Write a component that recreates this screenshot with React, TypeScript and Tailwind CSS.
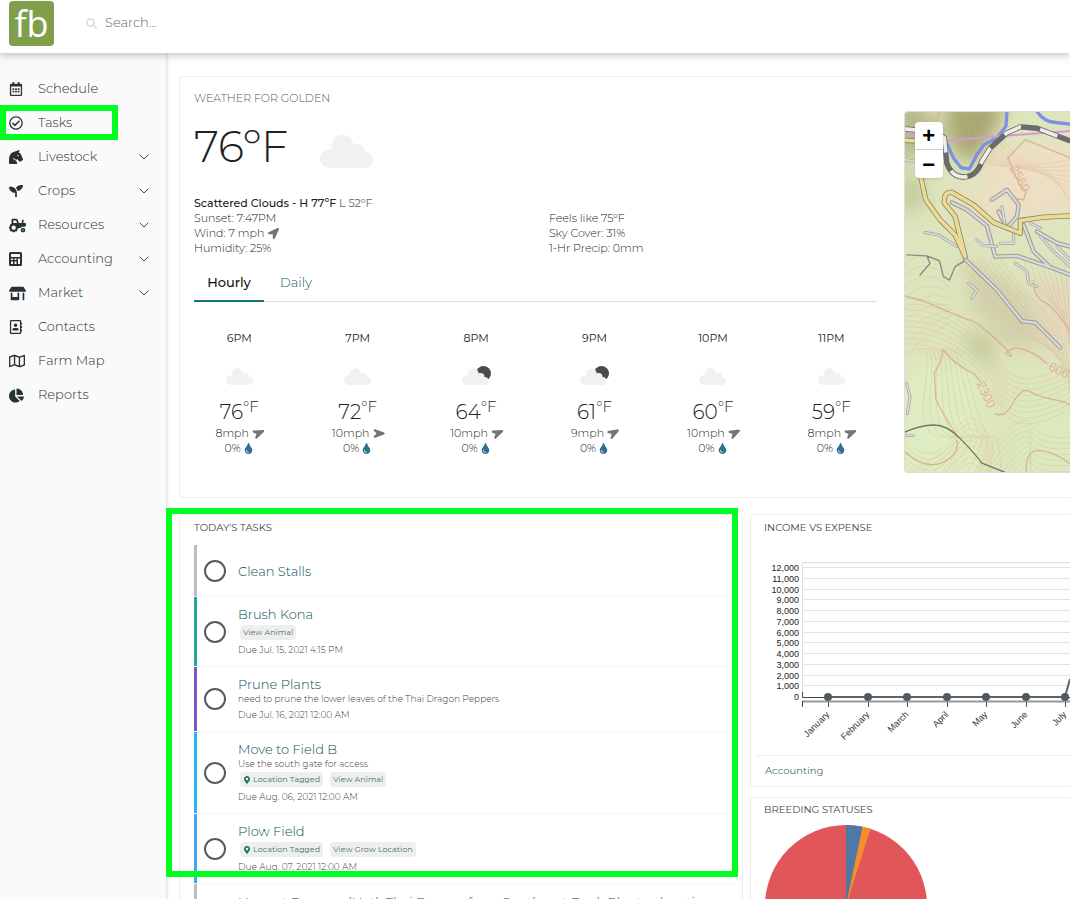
import { useState } from 'react'
import type { ReactNode } from 'react'
import { ChevronDown } from 'lucide-react'
import {
  FaChartPie,
  FaHorseHead,
  FaLocationArrow,
  FaMapMarkerAlt,
  FaRegAddressBook,
  FaRegCalendarAlt,
  FaRegCheckCircle,
  FaRegMap,
  FaSearch,
  FaSeedling,
  FaStoreAlt,
  FaTint,
  FaTractor,
} from 'react-icons/fa'

interface NavItem {
  label: string
  icon: ReactNode
  expandable?: boolean
  highlighted?: boolean
}

interface Hour {
  time: string
  temp: number
  wind: number
  rotation: string
  night?: boolean
}

interface Task {
  title: string
  color: string
  note?: string
  located?: boolean
  link?: string
  due?: string
}

function CalculatorIcon() {
  return (
    <svg viewBox="0 0 13 14" className="h-3.5 w-[13px]" fill="currentColor">
      <path
        fillRule="evenodd"
        d="M1.5 0h10A1.5 1.5 0 0 1 13 1.500v11a1.500 1.500 0 0 1-1.500 1.500h-10A1.500 1.500 0 0 1 0 12.500v-11A1.500 1.500 0 0 1 1.500 0zM2 2v3h9V2zM2 6.500v1.500h2V6.500zM5.500 6.500v1.500h2V6.500zM9 6.500V12h2V6.500zM2 9.500V12h2V9.500zM5.500 9.500V12h2V9.500z"
      />
    </svg>
  )
}

const navItems: NavItem[] = [
  { label: 'Schedule', icon: <FaRegCalendarAlt size={14} /> },
  { label: 'Tasks', icon: <FaRegCheckCircle size={14} />, highlighted: true },
  { label: 'Livestock', icon: <FaHorseHead size={14} />, expandable: true },
  { label: 'Crops', icon: <FaSeedling size={14} />, expandable: true },
  { label: 'Resources', icon: <FaTractor size={17} />, expandable: true },
  { label: 'Accounting', icon: <CalculatorIcon />, expandable: true },
  { label: 'Market', icon: <FaStoreAlt size={17} />, expandable: true },
  { label: 'Contacts', icon: <FaRegAddressBook size={14} /> },
  { label: 'Farm Map', icon: <FaRegMap size={16} /> },
  { label: 'Reports', icon: <FaChartPie size={15} /> },
]

const hours: Hour[] = [
  { time: '6PM', temp: 76, wind: 8, rotation: 'rotate-[22deg]' },
  { time: '7PM', temp: 72, wind: 10, rotation: 'rotate-45' },
  { time: '8PM', temp: 64, wind: 10, rotation: 'rotate-[22deg]', night: true },
  { time: '9PM', temp: 61, wind: 9, rotation: 'rotate-[15deg]', night: true },
  { time: '10PM', temp: 60, wind: 10, rotation: 'rotate-[18deg]' },
  { time: '11PM', temp: 59, wind: 8, rotation: 'rotate-[22deg]' },
]

const tasks: Task[] = [
  { title: 'Clean Stalls', color: 'border-l-[#bdbdbd]' },
  { title: 'Brush Kona', color: 'border-l-[#26a69a]', link: 'View Animal', due: 'Due Jul. 15, 2021 4:15 PM' },
  {
    title: 'Prune Plants',
    color: 'border-l-[#7e57c2]',
    note: 'need to prune the lower leaves of the Thai Dragon Peppers',
    due: 'Due Jul. 16, 2021 12:00 AM',
  },
  {
    title: 'Move to Field B',
    color: 'border-l-[#29b6f6]',
    note: 'Use the south gate for access',
    located: true,
    link: 'View Animal',
    due: 'Due Aug. 06, 2021 12:00 AM',
  },
  {
    title: 'Plow Field',
    color: 'border-l-[#42a5f5]',
    located: true,
    link: 'View Grow Location',
    due: 'Due Aug. 07, 2021 12:00 AM',
  },
  {
    title: 'Harvest Peppers (Hot), Thai Dragon from Southeast Deck Planter, location',
    color: 'border-l-[#bdbdbd]',
    due: 'Due Aug. 08, 2021 12:00 AM',
  },
]

const months = ['January', 'February', 'March', 'April', 'May', 'June', 'July']

function CloudIcon({ night = false, className }: { night?: boolean; className: string }) {
  return (
    <svg viewBox={night ? '0 -5 58 38' : '0 0 53 33'} className={className}>
      {night && <circle cx="43" cy="10" r="15" fill="#4a4a4a" />}
      <g fill="#f1f1f0">
        <circle cx="22.500" cy="11" r="11" />
        <circle cx="37" cy="17" r="8" />
        <circle cx="9.500" cy="23.500" r="9.500" />
        <circle cx="45" cy="25" r="8" />
        <path d="M14 12H37L45 19V33H9.500z" />
      </g>
    </svg>
  )
}

function Sidebar() {
  return (
    <nav className="w-[167px] shrink-0 border-r border-[#e6eaea] bg-[#fafafa] pt-[19px] shadow-[1px_0_3px_rgba(0,0,0,0.1)]">
      {navItems.map((item) => (
        <a key={item.label} href="#" className="relative flex h-[34px] items-center pr-3.5 pl-[9px] text-[#263238]">
          <span className="w-[29px]">{item.icon}</span>
          <span className="flex-1 text-[13px] font-light text-[#263238]">{item.label}</span>
          {item.expandable && <ChevronDown size={16} strokeWidth={1.5} className="text-[#444]" />}
          {item.highlighted && (
            <span className="pointer-events-none absolute -top-px left-0 h-[35px] w-[118px] border-[6px] border-[#00ff21]" />
          )}
        </a>
      ))}
    </nav>
  )
}

function TopoMap() {
  const slopes = Array.from({ length: 9 }, (_, i) => i * 17)
  return (
    <svg
      viewBox="45 36 495 1080"
      preserveAspectRatio="xMidYMid slice"
      className="block h-[360px] w-full"
      fill="none"
      strokeLinejoin="round"
      strokeLinecap="round"
    >
      <defs>
        <filter id="relief" x="-30%" y="-30%" width="160%" height="160%">
          <feGaussianBlur stdDeviation="26" />
        </filter>
      </defs>
      <rect x="45" y="36" width="495" height="1080" fill="#dde5bd" />
      <g filter="url(#relief)">
        <path fill="#a9a873" d="M165 0H345L310 110L235 200L175 130z" />
        <path fill="#b5b888" d="M20 0H90L160 110L20 200z" />
        <path fill="#ecdfc4" d="M300 150L580 110V330L380 380L250 300z" />
        <path fill="#e6debf" d="M170 250L320 330L300 430L180 330z" />
        <path fill="#c5cc9e" d="M20 230H90L120 310L20 350z" />
        <path fill="#d3d1ac" d="M220 470L380 560L520 760L340 740L240 620z" />
        <path fill="#c4cc9b" d="M220 690L310 720L300 810L230 750z" />
        <path fill="#dfedc2" d="M60 800H250L300 1140H20z" />
        <path fill="#e2d9bb" d="M430 540H580V790L440 740z" />
        <path fill="#dbe9bf" d="M380 880L580 850V1150H330z" />
      </g>

      <g stroke="#dca582" strokeWidth="2" opacity="0.4">
        {slopes.map((d) => (
          <g key={d}>
            <path d={`M${245 + d} 36Q${190 + d} 75 ${205 + d} 120T${290 + d} 190T540 ${180 + d}`} />
            <path d={`M${195 + d} 480Q${250 + d} 560 ${330 + d} 640T540 ${770 + d}`} />
            <path d={`M45 ${595 + d}Q130 ${590 + d} 210 ${645 + d}T335 ${790 + d}T540 ${790 + d}`} />
            <path d={`M45 ${490 + d * 2}Q120 ${430 + d * 2} 180 ${530 + d}`} />
            <path d={`M${60 + d} 760Q${130 + d / 2} 700 ${105 + d} 860T${170 + d} 1010T${60 + d * 2} 1116`} />
            <path d={`M45 ${1020 + d}Q130 ${1110 + d} 190 ${1000 + d}T300 ${1030 + d}`} />
            <path d={`M${250 + d} 1116Q${390 + d / 3} ${920 + d} 420 ${970 + d}T540 ${1010 + d}`} />
            <path d={`M${400 + d} 480Q${420 + d} 570 540 ${650 + d}`} />
            <path d={`M45 ${90 + d}Q110 ${50 + d} 150 36`} />
          </g>
        ))}
      </g>
      <g stroke="#d9a27c" strokeWidth="4" opacity="0.7">
        <path d="M540 175L405 120L353 175L390 260L408 275L400 300L370 296" />
        <path d="M45 588Q100 600 160 628T240 660T325 725T345 760Q365 738 400 748T470 790" />
        <path d="M206 1014Q150 930 137 895L133 815Q155 790 158 748Q190 790 250 820L275 850M315 940Q345 955 370 905Q395 860 420 875T500 900T540 935" />
        <path d="M45 1055Q110 1110 160 1085T200 1020M408 1116Q405 1050 445 1050T540 1090" />
        <path d="M430 540Q430 590 460 605T540 695" />
      </g>

      <path stroke="#7d90e2" strokeWidth="10" d="M350 36L347 80L320 115L282 135L260 165L238 208L213 204L190 175L172 135M440 36Q460 65 490 68L540 74" />
      <path stroke="#d798d6" strokeWidth="6" d="M45 104L165 124L350 108L540 94" />

      <g stroke="#8a8a84" strokeWidth="4">
        <path d="M50 465L110 468L148 482L160 530L178 540L195 500L225 482M110 468L120 490L90 525" />
        <path stroke="#70766c" d="M45 995Q90 975 130 974T210 1014T275 1088L345 1116" />
      </g>
      <g stroke="#9a9a98" strokeWidth="13">
        <path d="M185 308L230 330L290 378L315 470L380 468L480 502L540 525M305 300L350 270L385 315L380 350L350 385L325 335M400 375L430 455L480 502M440 395L500 430L540 440M225 478L320 570L395 663L435 668L510 743" />
      </g>
      <g stroke="#d9d9d9" strokeWidth="7">
        <path d="M185 308L230 330L290 378L315 470L380 468L480 502L540 525M305 300L350 270L385 315L380 350L350 385L325 335M400 375L430 455L480 502M440 395L500 430L540 440M225 478L320 570L395 663L435 668L510 743" />
      </g>
      <g stroke="#a2a2a0" strokeWidth="9">
        <path d="M260 420L280 437L320 440M335 320L345 380M370 395V430H330M105 398L145 405L200 440M375 490L410 515L415 550L440 560M235 550L260 570L245 595M45 180L75 185M48 1005H70M50 850L60 890L52 940M420 370L450 385M450 410L490 455L540 500M500 440L540 480" />
      </g>
      <g stroke="#dcdcdc" strokeWidth="5">
        <path d="M260 420L280 437L320 440M335 320L345 380M370 395V430H330M105 398L145 405L200 440M375 490L410 515L415 550L440 560M235 550L260 570L245 595M45 180L75 185M48 1005H70M50 850L60 890L52 940M420 370L450 385M450 410L490 455L540 500M500 440L540 480" />
      </g>

      <path stroke="#8d8769" strokeWidth="16" d="M45 122L85 125L92 230L107 300L150 360L195 405L225 470L195 350L163 310Q160 275 185 278L250 315L310 368L390 400V362L460 352L540 348" />
      <path stroke="#eadb95" strokeWidth="11" d="M45 122L85 125L92 230L107 300L150 360L195 405L225 470L195 350L163 310Q160 275 185 278L250 315L310 368L390 400V362L460 352L540 348" />

      <path stroke="#6b6b69" strokeWidth="16" strokeLinecap="butt" d="M45 88L140 98L163 115L170 190Q185 232 220 232Q260 230 275 185L300 145L350 100L390 82L440 86L540 124" />
      <path stroke="#eeeeea" strokeWidth="11" strokeLinecap="butt" strokeDasharray="55 58" d="M45 88L140 98L163 115L170 190Q185 232 220 232Q260 230 275 185L300 145L350 100L390 82L440 86L540 124" />

      <g fill="#e0b39c" fontFamily="Liberation Sans" fontSize="38">
        <text transform="translate(358 205) rotate(62)">2560</text>
        <text transform="translate(258 850) rotate(65)">2300</text>
        <text transform="translate(472 808) rotate(25)">600</text>
      </g>
    </svg>
  )
}

function IncomeChart() {
  return (
    <svg viewBox="0 0 306 200" preserveAspectRatio="xMinYMin slice" className="block h-[200px] w-full" fontFamily="Liberation Sans">
      <path d="M38.500 153V17.500H306" fill="none" stroke="#dedede" />
      {Array.from({ length: 13 }, (_, i) => {
        const y = Math.round(152 - i * 10.75)
        return (
          <g key={i}>
            {i > 0 && <path d={`M38 ${y - 0.5}H306`} stroke="#e3e3e3" />}
            <text x="35" y={y + 3} textAnchor="end" fontSize="9" fill="#222">
              {(i * 1000).toLocaleString('en-US')}
            </text>
          </g>
        )
      })}
      <path d="M38.500 147V152.500H306" fill="none" stroke="#444" />
      <path d="M38 156.500H306" stroke="#999" strokeWidth="2" />
      <path d="M38.500 156V162" stroke="#444" />
      <path d="M64 152H301L306 134" fill="none" stroke="#5a646b" strokeWidth="2" />
      {months.map((month, i) => {
        const x = Math.round(64 + i * 39.5)
        return (
          <g key={month}>
            <path d={`M${x + 0.5} 157V162`} stroke="#555" />
            <circle cx={x} cy="152" r="4" fill="#4f5a61" />
            <text transform={`translate(${x + 2} 170) rotate(-45)`} textAnchor="end" fontSize="9" fill="#333">
              {month}
            </text>
          </g>
        )
      })}
    </svg>
  )
}

function BreedingPie() {
  return (
    <svg viewBox="-81 -81 162 162" className="ml-px block size-[162px]">
      <circle r="81" fill="#e15759" />
      <path d="M0 0V-81A81 81 0 0 1 16.500 -79.300z" fill="#4e79a7" />
      <path d="M0 0L16.500 -79.300A81 81 0 0 1 24.500 -77.200z" fill="#f28e2b" />
    </svg>
  )
}

function WeatherCard() {
  const [tab, setTab] = useState('Hourly')

  return (
    <section className="flex h-[422px] gap-[27px] rounded-l border border-r-0 border-[#eee] pl-3.5">
      <div className="min-w-0 flex-1 pt-[13px]">
        <h2 className="text-[11px] leading-4 font-light text-[#555]">WEATHER FOR GOLDEN</h2>
        <div className="mt-[11px] flex h-[61px] gap-8">
          <span className="text-[43px] leading-[60px] font-light text-[#222]">76ºF</span>
          <CloudIcon className="mt-[18px] h-[33px] w-[53px]" />
        </div>
        <div className="mt-[18px] grid grid-cols-[52fr_48fr] text-[11px] leading-[15px] font-light text-[#222]">
          <div>
            <p className="font-normal text-[#666]">
              <span className="font-medium text-[#222]">Scattered Clouds - H 77ºF</span> L 52ºF
            </p>
            <p>Sunset: 7:47PM</p>
            <p className="flex items-center gap-1">
              Wind: 7 mph <FaLocationArrow size={11} className="text-[#757575]" />
            </p>
            <p>Humidity: 25%</p>
          </div>
          <div className="pt-[15px]">
            <p>Feels like 75ºF</p>
            <p>Sky Cover: 31%</p>
            <p>1-Hr Precip: 0mm</p>
          </div>
        </div>
        <div className="mt-[9px] flex h-[37px] border-b border-[#ddd] text-[13px]">
          {['Hourly', 'Daily'].map((name) => (
            <button
              key={name}
              type="button"
              onClick={() => setTab(name)}
              className={
                tab === name
                  ? '-mb-px w-[70px] border-b-2 border-[#12776c] font-medium text-[#111]'
                  : 'w-[64px] font-light text-[#12585c]'
              }
            >
              {name}
            </button>
          ))}
        </div>
        <div className="-mx-3.5 mt-[29px] grid grid-cols-6 text-center text-[11px] leading-[15px] font-light text-[#222]">
          {hours.map((hour) => (
            <div key={hour.time}>
              <p className="font-normal">{hour.time}</p>
              <div className="mt-[18px] flex h-[26px] items-end justify-center">
                <CloudIcon night={hour.night} className={hour.night ? 'mb-[5px] h-[19px] w-[29px]' : 'mb-[5px] h-[17px] w-[27px]'} />
              </div>
              <p className="mt-1.5 flex h-7 justify-center">
                <span className="text-[20px] leading-[32px]">{hour.temp}</span>
                <span className="text-[15px] leading-[22px]">°F</span>
              </p>
              <p className="mt-0.5 flex items-center justify-center gap-[3px]">
                {hour.wind}mph <FaLocationArrow size={11} className={`text-[#757575] ${hour.rotation}`} />
              </p>
              <p className="flex items-center justify-center gap-0.5">
                0% <FaTint size={11} className="text-[#31708f]" />
              </p>
            </div>
          ))}
        </div>
      </div>
      <div className="relative mt-[34px] h-[362px] w-[19%] overflow-hidden rounded-l-sm border border-r-0 border-[#ddd]">
        <TopoMap />
        <div className="absolute top-2.5 left-2.5 flex w-7 flex-col divide-y divide-[#ccc] rounded-sm bg-white font-['Liberation_Sans',sans-serif] text-[22px] leading-[27px] font-bold text-black shadow">
          <button type="button" aria-label="Zoom in" className="h-7">+</button>
          <button type="button" aria-label="Zoom out" className="h-7">−</button>
        </div>
      </div>
    </section>
  )
}

function TaskRow({ task }: { task: Task }) {
  const [done, setDone] = useState(false)

  return (
    <li className="flex min-h-[52px] items-center border-b border-[#f5f5f5]">
      <div className={`flex flex-1 items-center self-stretch border-l-[3px] py-[9px] pl-[7px] ${task.color}`}>
        <input
          type="checkbox"
          aria-label={task.title}
          checked={done}
          onChange={(e) => setDone(e.target.checked)}
          className="mr-3 size-[22px] shrink-0 appearance-none rounded-full border-2 border-[#555b66] checked:bg-[#26a69a]"
        />
        <div className="text-[9px] leading-[14px] font-light text-[#403a42]">
          <a href="#" className="block text-[13px] leading-4 whitespace-nowrap text-[#0b5054]">
            {task.title}
          </a>
          {task.note && <p>{task.note}</p>}
          {task.link && (
            <div
              className={`mb-[3px] ml-0.5 flex gap-[7px] text-[8px] leading-[15px] font-normal text-[#47706f] ${task.note ? 'mt-px' : 'mt-[3px]'}`}
            >
              {task.located && (
                <a href="#" className="flex items-center gap-0.5 rounded-sm bg-[#eee] px-[3px]">
                  <FaMapMarkerAlt size={8} className="text-[#12776c]" />
                  Location Tagged
                </a>
              )}
              <a href="#" className="rounded-sm bg-[#eee] px-[3px]">{task.link}</a>
            </div>
          )}
          {task.due && <p className={task.link ? '' : 'mt-0.5'}>{task.due}</p>}
        </div>
      </div>
    </li>
  )
}

export default function App() {
  return (
    <div className="flex h-screen flex-col overflow-hidden bg-white font-[Montserrat,Inter,sans-serif]">
      <header className="relative z-10 flex h-[53px] shrink-0 bg-white pl-[9px] shadow-[0_2px_8px_rgba(0,0,0,0.25)]">
        <a href="#" className="mt-px flex size-[45px] items-center justify-center rounded bg-[#7f9f4c] font-['Open_Sans',sans-serif] text-[36px] leading-[45px] font-normal text-white">
          fb
        </a>
        <label className="ml-8 flex h-[45px] items-center gap-2 text-[#ddd]">
          <FaSearch size={11} className="mt-0.5" />
          <input
            type="search"
            aria-label="Search"
            placeholder="Search..."
            className="w-60 text-[13px] font-light text-[#555] outline-none placeholder:text-[#666]"
          />
        </label>
      </header>
      <div className="flex min-h-0 flex-1">
        <Sidebar />
        <main className="min-w-0 flex-1 pt-[23px] pl-3">
          <WeatherCard />
          <div className="relative mt-4 grid grid-cols-[564fr_320fr] gap-[7px]">
            <section className="min-w-0 overflow-hidden rounded border border-[#eee] pt-[5px] pr-[7px] pl-3.5">
              <h2 className="text-[10px] leading-4 text-[#444]">TODAY'S TASKS</h2>
              <ul className="mt-[9px]">
                {tasks.map((task) => (
                  <TaskRow key={task.title} task={task} />
                ))}
              </ul>
            </section>
            <div className="flex min-w-0 flex-col gap-2.5">
              <section className="rounded-l border border-r-0 border-[#eee]">
                <h2 className="pt-[5px] pl-[13px] text-[10px] leading-4 text-[#444]">INCOME VS EXPENSE</h2>
                <div className="mt-[9px] pl-[13px]">
                  <IncomeChart />
                </div>
                <div className="mt-2.5 ml-[5px] border-t border-[#eee] py-[7px] pl-[9px]">
                  <a href="#" className="block text-[10px] leading-4 text-[#47706f]">Accounting</a>
                </div>
              </section>
              <section className="rounded-l border border-r-0 border-[#eee] pt-1 pl-[13px]">
                <h2 className="text-[10px] leading-4 text-[#444]">BREEDING STATUSES</h2>
                <div className="mt-[7px]">
                  <BreedingPie />
                </div>
              </section>
            </div>
            <div className="pointer-events-none absolute -top-1.5 -left-[13px] h-[369px] w-[572px] border-[6px] border-[#00ff21]" />
          </div>
        </main>
      </div>
    </div>
  )
}
